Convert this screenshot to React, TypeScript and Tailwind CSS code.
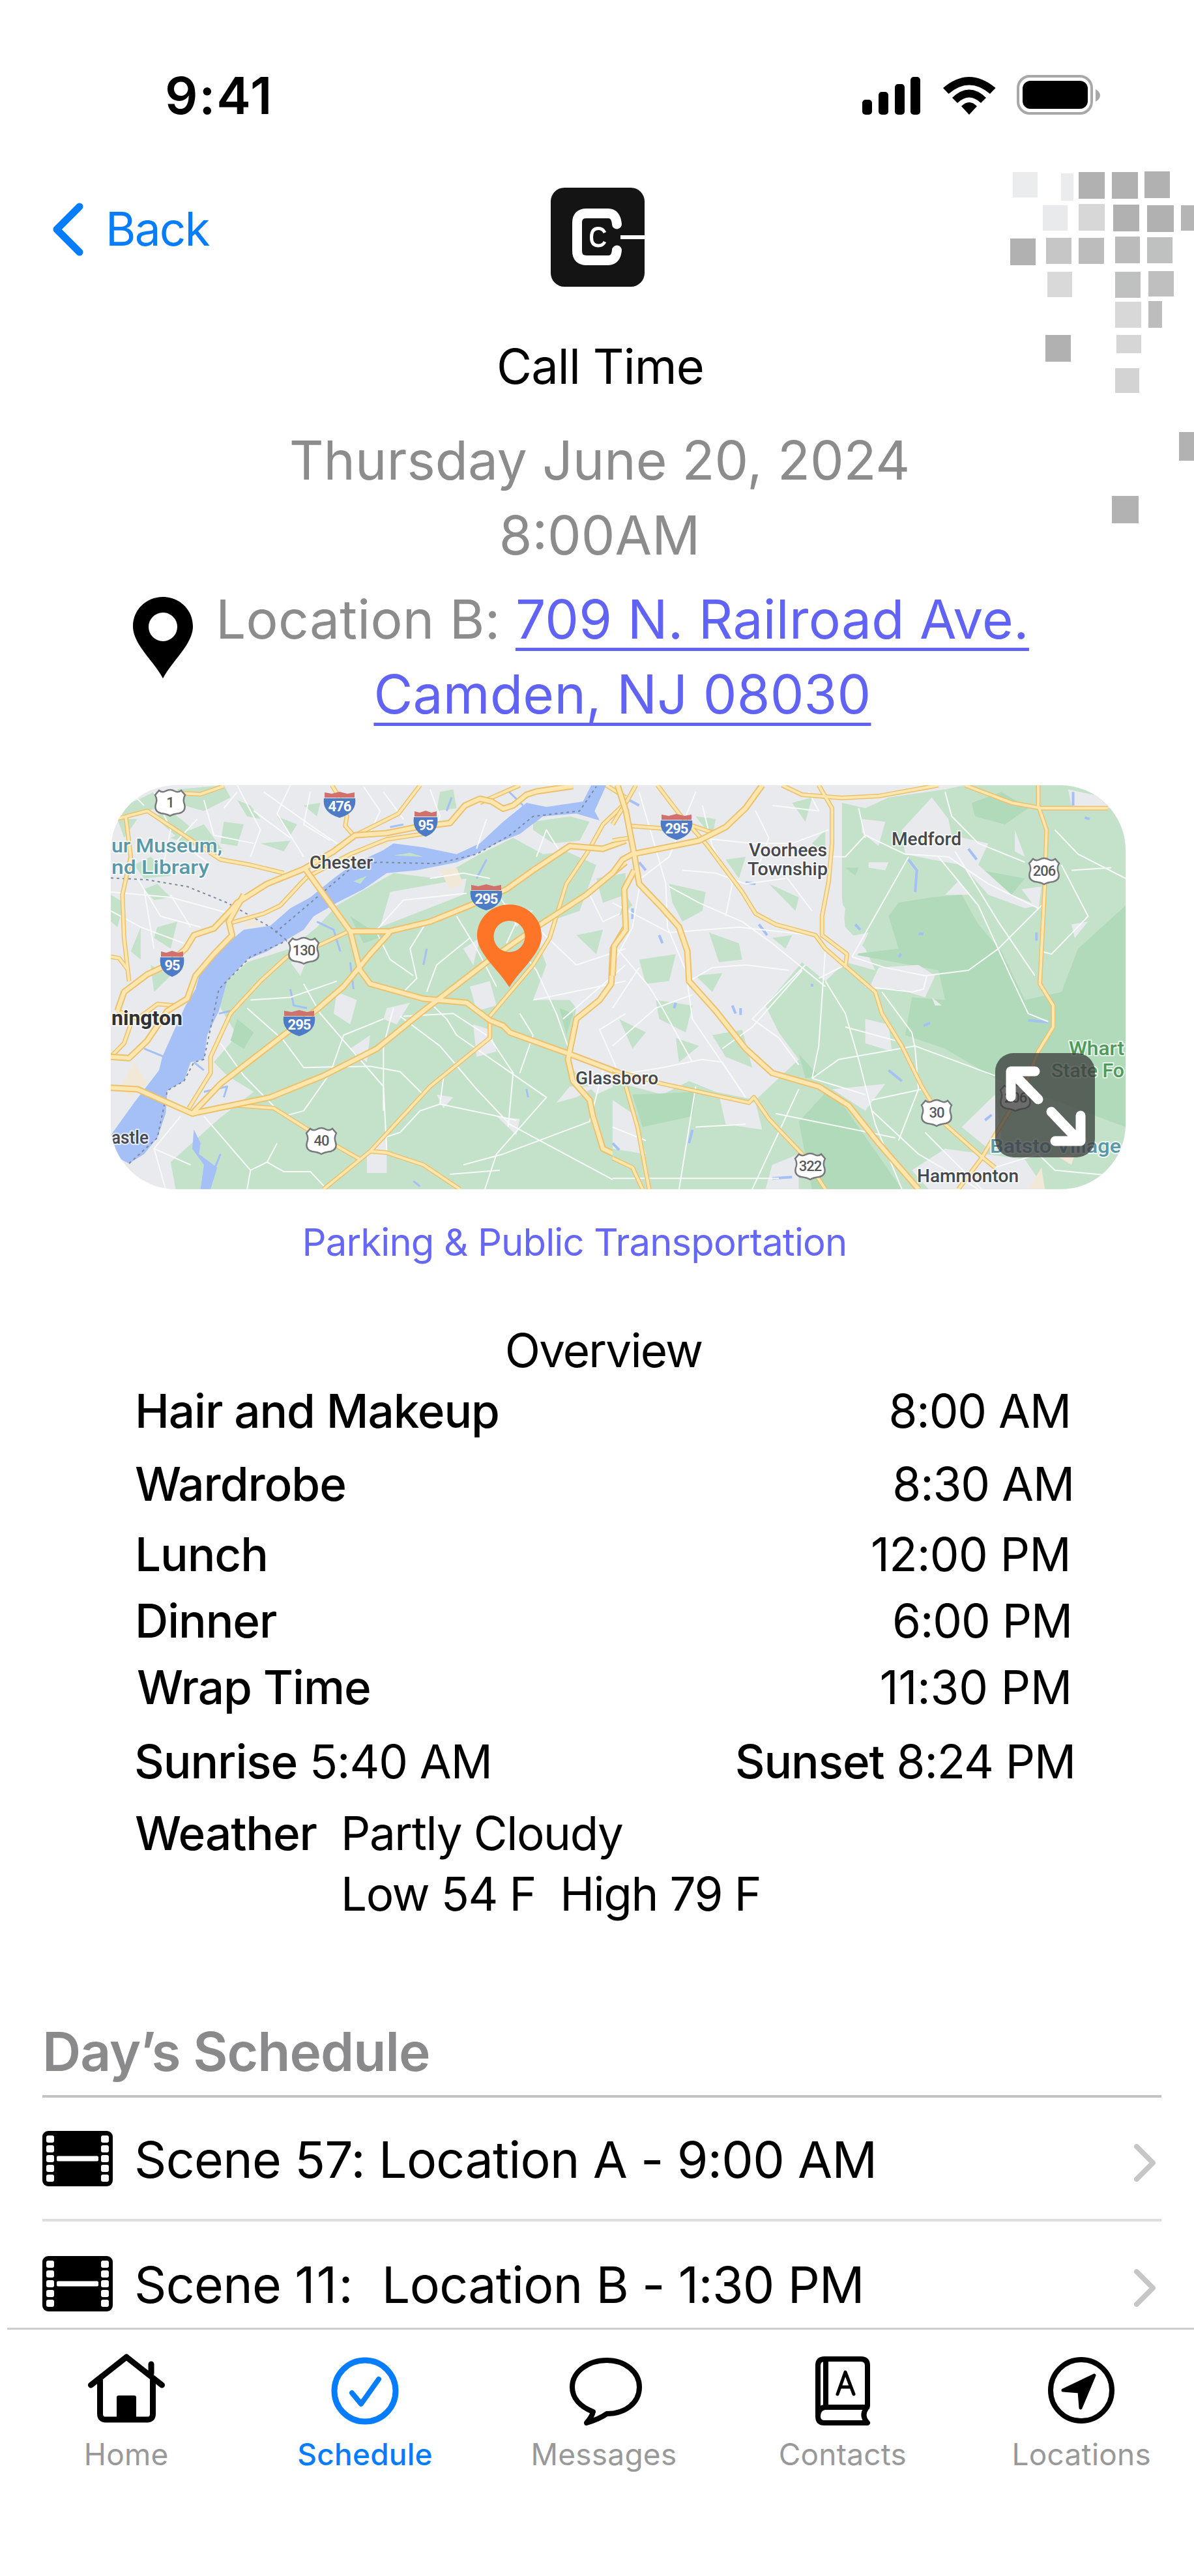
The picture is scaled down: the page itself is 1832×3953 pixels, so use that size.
import type { ReactNode } from 'react';

interface OverviewRow {
  label: string;
  time: string;
  className: string;
  labelClass: string;
  timeClass: string;
}

const overviewRows: OverviewRow[] = [
  { label: 'Hair and Makeup', time: '8:00 AM', className: '-mt-[1px]', labelClass: 'pl-[207px]', timeClass: 'pr-[189px]' },
  { label: 'Wardrobe', time: '8:30 AM', className: 'mt-[18px]', labelClass: 'pl-[207px]', timeClass: 'pr-[184px]' },
  { label: 'Lunch', time: '12:00 PM', className: 'mt-[14px]', labelClass: 'pl-[207px]', timeClass: 'pr-[189px] tracking-[-0.008em]' },
  { label: 'Dinner', time: '6:00 PM', className: 'mt-[8px]', labelClass: 'pl-[207px]', timeClass: 'pr-[187px]' },
  { label: 'Wrap Time', time: '11:30 PM', className: 'mt-[8px]', labelClass: 'pl-[210px]', timeClass: 'pr-[187px] tracking-[-0.002em]' },
];

const scenes = [
  { number: '57', numberClass: '', rest: ' Location A - 9:00 AM' },
  { number: '11', numberClass: 'tracking-[0.03em]', rest: '  Location B - 1:30 PM' },
];

// x, y, width, height, fill
const pixels: [number, number, number, number, string][] = [
  [4, 1, 38, 39, '#ebecee'],
  [78, 3, 19, 42, '#ebecee'],
  [105, 1, 40, 41, '#b1b1b1'],
  [156, 1, 40, 41, '#b1b1b1'],
  [206, 0, 39, 41, '#b1b1b1'],
  [50, 52, 38, 39, '#e9eaec'],
  [105, 50, 40, 41, '#d7d7d7'],
  [158, 51, 40, 41, '#b1b1b1'],
  [210, 52, 41, 41, '#b1b1b1'],
  [262, 52, 20, 39, '#b5b5b5'],
  [0, 103, 39, 41, '#b1b1b1'],
  [55, 102, 39, 40, '#c6c6c6'],
  [105, 102, 39, 40, '#bcbcbc'],
  [161, 100, 38, 41, '#bbbbbb'],
  [210, 101, 39, 40, '#bfc1c0'],
  [57, 154, 38, 39, '#d9d9d9'],
  [161, 154, 39, 40, '#bfc1c0'],
  [212, 153, 39, 39, '#bfbfbf'],
  [161, 200, 40, 40, '#d8d8d8'],
  [212, 199, 21, 41, '#bdbdbd'],
  [54, 251, 39, 41, '#b1b1b1'],
  [163, 251, 38, 28, '#d6d6d6'],
  [161, 302, 37, 38, '#d3d3d3'],
  [259, 400, 23, 44, '#b2b2b2'],
  [156, 498, 41, 42, '#b2b2b2'],
];

const westRoads = [
  'M40 870L60 800 130 735 190 700 245 640 270 590 330 565 380 500 400 470 490 400 600 345 690 280 755 220 850 212 940 190 1040 175 1085 110 1130 85 1165 95 1200 122 1230 110 1270 70 1300 58 1410 38',
  'M20 1155L100 1160 265 1250 350 1140 450 1045 550 950 640 865 720 780 800 660 855 585 860 575',
  'M265 1250L500 1190 660 1110 820 1010 960 870 1150 690 1300 560 1450 440 1568 320',
  'M605 345L740 575 770 720 800 770 960 825 1090 840 1160 905 1200 925 1220 950 1400 1030 1550 1100',
  'M735 576L860 575 980 540 1100 480 1210 420 1290 350 1400 260 1500 270 1568 240',
  'M20 1040L75 1045 130 980 190 870 250 825 275 740 330 660 385 590 375 540 420 440',
  'M1568 560L1530 640 1525 770 1490 830 1420 900 1395 1050 1410 1130 1460 1200 1470 1260 1500 1380 1568 1420',
];

const westSmallRoads = [
  'M20 165L130 130 240 220 350 310 440 330 540 360',
  'M240 65L290 68 360 38',
  'M65 150L80 300 55 440 60 600 75 760',
  'M1160 890L1290 700 1340 600 1390 400 1455 280 1500 180 1568 100',
  'M1160 905V970L980 1150 890 1270 800 1390 660 1530',
  'M265 1250L400 1220 510 1230 620 1315 770 1420',
  'M800 1390L850 1395 960 1440 1070 1530',
  'M255 1230L320 1100 320 1040 380 880 470 760 550 670 650 625 735 576',
  'M685 35L700 65 730 150 725 185 750 220',
  'M950 35L885 140 755 220',
  'M20 670L45 675 70 715M40 870L100 900 160 845 210 850M20 1040L60 990 80 920',
  'M380 545L480 510 530 480 560 440 590 400 610 375 740 290 850 235 960 215',
  'M1510 35L1568 80M1130 100L1250 35',
];

const eastRoads = [
  'M15 35L40 130 65 290 80 400 150 490 200 560 225 650 230 760 310 870 400 1010 480 1100 620 1150 710 1220 800 1360 920 1530',
  'M0 360L30 310 60 290 260 240 340 190 400 120 450 35',
  'M65 350L35 420 40 570 5 630 0 740',
];

const eastSmallRoads = [
  'M135 35L200 140 280 250 390 430 430 510 490 550 610 590 640 640 790 800 810 880 870 1000 930 1150 1000 1290 1110 1410 1150 1450',
  'M510 35L570 70 690 82 800 75 980 35',
  'M620 35L660 120 660 250 650 390 630 520 630 590 705 660 700 710',
  'M1060 35L1200 100 1290 120 1490 120',
  'M1280 35V110L1305 200 1300 400 1285 770 1325 850 1325 930 1280 1020 1240 1150 1150 1330 1110 1415 1040 1530',
  'M0 1090L150 1140 410 1210 425 1190 470 1270 570 1400 640 1530',
  'M0 1415L60 1450 90 1530M40 1150L75 1300 110 1530',
  'M50 185L150 195 240 185 300 210M0 240L50 230M70 35L45 90 0 180',
];

const westStreets = [
  'M20 430L200 450 380 510M100 380L170 520 290 560M150 60L200 200 180 320M400 35L470 200 440 300M560 35L520 140 600 300M780 40L830 130 800 210M300 90L330 220 450 250M480 60L640 200 700 250',
  'M900 460L820 570M900 460L1090 435M1120 270L1150 160M980 380L1080 360 1160 380M1300 300L1330 200 1370 280',
  'M970 540L920 640 940 750 900 800M820 580L860 680 930 740M1060 520L1120 640 1180 780M1250 640L1300 720 1360 880 1400 1020M1290 830L1568 760',
  'M350 990L420 1110 540 1260 600 1240 680 1100 720 960 840 900M600 770L650 880 720 980 840 1150 850 1390M440 830L560 820 700 760',
  'M870 860L840 1000 840 1240M890 890L1010 1000 1120 1160 1220 1290 1310 1350 1568 1520M980 840L1030 900 1060 960 1330 1190 1180 1400 1145 1530M1160 970L1230 1100 1215 1300',
  'M300 1260L440 1460 430 1530M440 1460L490 1430 520 1360M490 1430L540 1465 620 1465 670 1530M230 1260L150 1380 185 1530M150 1380L260 1440',
  'M840 1340L890 1320 950 1240 1010 1215 1240 1275M1010 1215L1020 1120 1060 1060M1080 1440L1200 1400 1460 1280 1500 1090M1040 1475L1190 1460M1150 960L1050 880 900 890M430 860L540 980 600 1080 800 1075 890 1095 960 1180',
  'M1250 880L1290 960 1250 1100M1568 880L1490 940 1540 1080M1380 900L1568 700M1300 560L1420 700 1568 640M1190 450L1240 540 1210 620M1460 440L1500 540 1568 500M1100 600L1000 700 970 800',
  'M80 60L120 110M280 160L220 240 310 320M20 500L110 560 240 620M120 420L150 640M200 440L260 560M450 130L560 230M620 60L600 180 680 240M840 60L900 160M360 120L400 60M980 50L1010 150 1000 180',
];

const eastStreets = [
  'M0 700L60 560 85 380 170 300 250 60M80 60L130 270 160 400 165 560 220 720 240 900 400 1190',
  'M0 620L110 780 150 860 240 1060M0 860L80 710M0 470L170 580 380 560 600 590M170 410L260 470 390 540 480 620 560 700 640 780',
  'M230 760L300 710 400 700 530 720M210 350L310 360 400 400 520 380M270 110L300 260 360 400 340 520M430 130L470 230 440 330M520 370L600 500M480 110L620 130 590 60M260 230L420 250 540 250 650 200',
  'M890 300L720 670M720 670L820 710 940 740 1070 720 1160 640 1290 480M880 290L1010 300 1130 400 1280 490M980 300L1100 480 1200 750 1250 880 1310 910M1000 60L1020 150 1100 250 1240 320M1030 280L1160 540 1270 740',
  'M640 760L700 880 740 1050 790 1290 870 1530M620 750L700 700M580 700L420 900 500 970 560 1070M600 1120L680 1050 910 1000 1150 1110M600 1120L760 1180M640 640L620 1000 600 1120M700 930L850 980',
  'M910 1010L920 1160 860 1350M780 1240L920 1400 1100 1530M490 1250L850 1340M330 1010L420 930 570 720M0 1000L130 860 240 810M0 1110L150 1080 270 1050 330 1060 400 1190M560 1160L420 1530M250 1150L200 1530M0 1490L500 1490M0 1300L100 1350',
  'M1330 200L1400 290 1543 380M1380 350L1500 340M1350 330L1430 520 1320 660 1290 650M810 800L900 950 910 1010M760 780L900 800 935 790 945 740M660 300L700 300 760 220 880 290M740 120L760 230M930 1160L780 1200',
  'M1150 1450L1280 1400 1330 1460 1500 1480M940 1320L1110 1530M400 1290L250 1300',
];

function Roads({ paths, casing, fill }: { paths: string[]; casing: string; fill: string }) {
  return (
    <>
      {paths.map((d) => (
        <path key={d} d={d} className={`stroke-[#ecc06c] ${casing}`} vectorEffect="non-scaling-stroke" />
      ))}
      {paths.map((d) => (
        <path key={d} d={d} className={`stroke-[#fde7ae] ${fill}`} vectorEffect="non-scaling-stroke" />
      ))}
    </>
  );
}

function UsShield({ x, y, label }: { x: number; y: number; label: string }) {
  return (
    <g transform={`translate(${x} ${y})`}>
      <path
        d="M-17 -18Q-12 -14 -7 -17Q0 -21 7 -17Q12 -14 17 -18L23 -11Q19 -4 22 3Q25 14 14 17Q5 18 0 21Q-5 18 -14 17Q-25 14 -22 3Q-19 -4 -23 -11Z"
        fill="#fff"
        stroke="#77797c"
        strokeWidth="2.5"
      />
      <text y="8" textAnchor="middle" fontSize="22" fontWeight="500" fill="#55585c" letterSpacing="-1">{label}</text>
    </g>
  );
}

function InterstateShield({ x, y, label }: { x: number; y: number; label: string }) {
  const w = label.length > 2 ? 24 : 18;
  return (
    <g transform={`translate(${x} ${y})`}>
      <path d={`M${-w} -10H${w}Q${w + 3} 12 0 20Q${-w - 3} 12 ${-w} -10Z`} fill="#4d7bc6" />
      <path d={`M${-w + 1} -11V-19L${-w / 2} -17 0 -20 ${w / 2} -17 ${w - 1} -19V-11Z`} fill="#d0716d" />
      <text y="10" textAnchor="middle" fontSize="22" fontWeight="700" fill="#fff" letterSpacing="-1">{label}</text>
    </g>
  );
}

function MapCard() {
  return (
    <div className="relative ml-[170px] mt-[82px] h-[620px] w-[1557px] overflow-hidden rounded-[100px] tracking-normal">
      <svg viewBox="0 0 1557 620" className="h-full w-full font-['Roboto',sans-serif]">
        <rect width="1557" height="620" fill="#e8eaed" />
        <g transform="scale(0.5102 0.4146) translate(-20 -35)" fill="none" strokeLinejoin="round">
          {/* Land cover */}
          <path
            d="M350 860L345 790 430 690 560 640 640 560 700 480 870 360 1000 380 1130 290 1230 230 1320 290 1390 280 1480 330 1430 500 1290 560 1330 700 1290 830 1400 830 1420 860 1390 1060 1480 1180 1568 1130V1530H215L200 1430 345 1270 450 1170 370 1110 330 1060 400 960Z"
            fill="#c4e2ca"
          />
          <path
            d="M220 50L360 35 380 80 300 130 240 110ZM150 150L200 130 260 190 230 240ZM360 170L420 180 400 260 350 250ZM400 90L440 110 470 160 430 150ZM100 160L60 230 40 160ZM120 420L160 400 200 450 150 460ZM20 440L60 470 40 560 20 540ZM90 330L140 300 200 370 120 380ZM160 560L220 540 200 640 150 600ZM520 150L580 180 560 220ZM1010 60L1050 50 1060 120 1000 130ZM1290 170L1400 150 1460 170 1430 240 1350 250 1290 200ZM470 250L560 240 540 280ZM600 110L650 100 640 150ZM1480 380L1568 360 1568 440 1500 470ZM1420 590L1500 570 1480 660ZM250 60L300 40 280 90ZM110 560L80 650 110 680ZM140 700L200 740 150 800ZM40 120L100 90 150 60 160 120 60 150ZM200 230L300 180 360 280 270 260Z"
            fill="#c4e2ca"
          />
          <path
            d="M700 800L760 830 740 920 690 880ZM850 860L920 840 880 920 840 900ZM1100 780L1160 760 1180 850 1120 870ZM1110 920L1160 940 1180 1020 1120 1040ZM1200 470L1290 500 1240 560ZM740 1010L800 960 790 1060ZM790 1400L850 1340 850 1470 790 1470ZM560 690L610 680 590 740ZM1080 640L1130 600 1110 700ZM860 430L1090 380 1080 440 830 560ZM1480 1150L1400 1150 1360 1210 1420 1190ZM1180 1260L1250 1270 1240 1330ZM1000 1180L1050 1190 1020 1230Z"
            fill="#e8eaed"
          />
          <path d="M400 900L450 950 420 1010 380 980ZM740 520L790 560 850 590 780 620ZM1370 860L1410 880 1390 960Z" fill="#b1dabb" />
          <path d="M1010 350L1060 340 1080 400 1040 420ZM90 1060L130 1140 80 1190 50 1150ZM440 530L480 550 420 560ZM820 250L850 235 850 270Z" fill="#f1e8d7" />

          {/* Delaware River and creeks */}
          <path
            d="M20 1330L90 1210 165 1090 175 1040 215 930 245 850 275 790 290 720 350 640 420 570 500 555 560 490 620 450 690 380 745 330 840 275 870 250 960 265 1060 290 1130 250 1200 170 1270 100 1330 115 1440 95 1465 35H1510L1475 130 1490 165 1420 140 1320 150 1250 215 1180 250 1100 300 1060 320 940 350 850 360 780 420 700 470 630 520 600 570 490 650 430 680 370 760 345 870 310 960 300 1050 260 1060 240 1130 190 1165 185 1250 160 1340 120 1400 75 1435 20 1400Z"
            fill="#a5bff7"
          />
          <path d="M750 390L790 370 770 400ZM870 295L960 300 920 285Z" fill="#c4e2ca" />
          <path
            d="M270 1310L290 1360 285 1400 340 1450 320 1530H290L300 1440 265 1380Z"
            fill="#a5bff7"
          />
          <path
            d="M560 790L570 850 610 860M640 540L690 570 710 650M740 690L750 790M345 880L380 870M1120 380L1150 310M120 1010L180 1040M860 190L900 180M1030 130L1045 80M1210 50L1260 110M270 1060L300 1090M300 1170L370 1150 360 1190M350 1400L330 1460M960 700L970 640M930 1500L950 1520M1270 1160L1275 1190"
            className="stroke-[#a5bff7] stroke-3"
            vectorEffect="non-scaling-stroke"
          />

          {westStreets.map((d) => (
            <path key={d} d={d} className="stroke-[#f8fafa] stroke-2" vectorEffect="non-scaling-stroke" />
          ))}
          <path
            d="M20 378L130 385 250 410 370 470 500 560 550 610M75 1435L160 1340 190 1165 240 1130 270 1060 300 1050 345 790 440 670 550 610M515 580L745 340 820 320 1000 325 1120 290 1220 220 1290 150 1430 130 1480 40"
            className="stroke-[#7d8a9c] stroke-2"
            strokeDasharray="4 5"
            vectorEffect="non-scaling-stroke"
          />
          <Roads paths={westSmallRoads} casing="stroke-7" fill="stroke-4" />
          <Roads paths={westRoads} casing="stroke-10" fill="stroke-6" />

          <g transform="translate(1529 0)">
            <path
              d="M690 100L760 120 830 80 1000 50 1060 35H1543V1530H0V1130L150 1180 230 1130 310 1170 430 1200 560 1050 500 950 460 850 570 690 640 760 700 690 790 720 760 640 700 560 690 450Z"
              fill="#c4e2ca"
            />
            <path
              d="M170 400L280 430 270 500 210 540 180 470ZM290 580L380 620 390 680 320 690ZM80 680L190 660 170 760 100 770ZM130 830L240 850 220 950 140 900ZM300 960L390 940 420 1080 340 1040ZM250 150L310 160 300 230ZM540 100L600 80 580 170ZM340 310L400 300 380 380ZM470 400L560 450 550 500ZM20 900L100 950 60 1010ZM190 970L260 1000 200 1060ZM480 600L540 590 520 640ZM250 740L330 730 300 800ZM40 440L60 480 20 520ZM600 250L640 200 640 290Z"
              fill="#c4e2ca"
            />
            <path
              d="M860 470L960 450 1050 440 1100 550 1170 650 1240 830 1350 800 1400 640 1543 480V1300L1150 1120 1000 1010 880 960 900 820 1000 830 980 720 720 660 860 640 830 520ZM560 1280L650 1160 700 1230 870 1530H600ZM1080 100L1170 60 1250 120 1180 180 1090 150ZM60 1180L250 1170 240 1260 90 1300ZM700 340L740 340 730 370ZM1110 350L1240 380 1200 440ZM560 1030L620 1110 580 1120ZM1340 960L1400 900 1420 980Z"
              fill="#b1dabb"
            />
            <path
              d="M870 200L960 80 1010 160 1020 220 1130 250 1100 330 1200 440 1280 480 1240 490 1130 440 1050 330 960 310 880 290ZM800 710L920 700 970 740 940 820 860 790 770 790ZM750 160L820 170 800 260 750 210ZM770 320L830 320 820 350 770 340ZM1370 50L1480 80 1500 120 1380 110ZM640 400L700 490 690 600 770 580 730 680 640 600ZM760 900L830 920 840 1020 760 990ZM660 1160L820 1140 760 1240ZM1050 1300L1150 1180 1170 1340 1130 1380ZM900 1460L1000 1380 1240 1420 1300 1530H950ZM320 1180L430 1210 450 1310 340 1290ZM1210 200L1240 300 1210 280ZM1230 420L1290 410 1280 500ZM1380 550L1430 540 1390 600ZM960 820L990 850 970 850ZM0 1200L60 1250 100 1400 0 1380ZM480 1440L560 1400 560 1530H460ZM1000 440L1040 390 1070 440Z"
              fill="#e8eaed"
            />
            <path d="M1340 1410L1390 1400 1380 1440ZM1290 1450L1300 1530H1250Z" fill="#f1e8d7" />
            <path
              d="M890 310L915 350 910 430M730 550L745 570M440 550L465 590M360 850L370 880M385 860V885M600 770V780M230 1360L240 1310M0 1360L20 1385M1250 905L1310 912M80 320L100 350M1385 60V110M60 490V530M140 590L150 620M1120 1275L1140 1255M480 1490L540 1485M830 1090L870 1130M1420 155L1435 160M920 585H935M1070 270L1095 310M860 670L868 660M935 925L955 915M190 840L185 860M1275 580V610M400 395L430 400M50 90L80 110"
              className="stroke-[#a5bff7] stroke-4"
              vectorEffect="non-scaling-stroke"
            />
            {eastStreets.map((d) => (
              <path key={d} d={d} className="stroke-[#f8fafa] stroke-2" vectorEffect="non-scaling-stroke" />
            ))}
            <Roads paths={eastSmallRoads} casing="stroke-7" fill="stroke-4" />
            <Roads paths={eastRoads} casing="stroke-10" fill="stroke-6" />
          </g>
        </g>

        <UsShield x={91} y={26} label="1" />
        <UsShield x={296} y={253} label="130" />
        <UsShield x={323} y={545} label="40" />
        <UsShield x={1432} y={131} label="206" />
        <UsShield x={1267} y={502} label="30" />
        <UsShield x={1073} y={584} label="322" />
        <UsShield x={1388} y={479} label="206" />
        <InterstateShield x={351} y={30} label="476" />
        <InterstateShield x={483} y={59} label="95" />
        <InterstateShield x={576} y={172} label="295" />
        <InterstateShield x={94} y={274} label="95" />
        <InterstateShield x={289} y={365} label="295" />
        <InterstateShield x={868} y={64} label="295" />

        <g fontSize="28" fill="#45484c" fontWeight="500" stroke="#fff" strokeOpacity="0.7" strokeWidth="4" strokeLinejoin="round" paintOrder="stroke">
          <text x="305" y="128" textLength="97" lengthAdjust="spacingAndGlyphs">Chester</text>
          <text x="713" y="459" textLength="127" lengthAdjust="spacingAndGlyphs">Glassboro</text>
          <text x="979" y="109" textLength="120" lengthAdjust="spacingAndGlyphs">Voorhees</text>
          <text x="977" y="138" textLength="123" lengthAdjust="spacingAndGlyphs">Township</text>
          <text x="1198" y="92" textLength="107" lengthAdjust="spacingAndGlyphs">Medford</text>
          <text x="1237" y="609" textLength="156" lengthAdjust="spacingAndGlyphs">Hammonton</text>
          <text x="1" y="550" textLength="57" lengthAdjust="spacingAndGlyphs">astle</text>
          <text x="1" y="368" textLength="109" lengthAdjust="spacingAndGlyphs" fontSize="32" fontWeight="700" fill="#2f3135">nington</text>
          <g fontSize="30" fill="#5898a9">
            <text x="1" y="103" textLength="170" lengthAdjust="spacingAndGlyphs">ur Museum,</text>
            <text x="1" y="136" textLength="150" lengthAdjust="spacingAndGlyphs">nd Library</text>
            <text x="1349" y="564" textLength="201" lengthAdjust="spacingAndGlyphs">Batsto Village</text>
          </g>
          <g fontSize="30" fill="#4f9a5b">
            <text x="1470" y="414" textLength="85" lengthAdjust="spacingAndGlyphs">Whart</text>
            <text x="1443" y="448" textLength="112" lengthAdjust="spacingAndGlyphs">State Fo</text>
          </g>
        </g>

        <path
          fillRule="evenodd"
          d="M611.500 310C595 283 562 258 562 231C562 204 584 183 611.500 183C639 183 661 204 661 231C661 258 628 283 611.500 310ZM611.500 208A24 24 0 1 0 611.500 256A24 24 0 1 0 611.500 208Z"
          fill="#ff7527"
        />
      </svg>
      <button className="absolute left-[1357px] top-[411px] h-[160px] w-[153px] rounded-[28px] bg-[#3a3a3a]/75">
        <svg viewBox="0 0 153 160" className="h-full w-full" fill="none" stroke="#fff" strokeWidth="15" strokeLinecap="round" strokeLinejoin="round">
          <path d="M61 28H24V67M26 30L66 71M86 90L128 134M131 96V135H92" />
        </svg>
      </button>
    </div>
  );
}

function StatusBar() {
  return (
    <div className="flex h-[288px] items-center pl-[253px] pt-1">
      <span className="w-[1070px] text-[79px] font-semibold leading-none tracking-[0.022em]">9:41</span>
      <svg width="366" height="62" viewBox="0 0 366 62">
        <rect x="0" y="38" width="15" height="23" rx="5" />
        <rect x="25" y="26" width="15" height="35" rx="5" />
        <rect x="50" y="14" width="15" height="47" rx="5" />
        <rect x="74" y="3" width="15" height="58" rx="5" />
        <path d="M124 20Q164 -14 204.500 20L196 29Q164 2 132.500 29Z" />
        <path d="M138 35Q164 10 190 35L182 43Q164 26 146 43Z" />
        <path d="M152 48Q164 36 176 48L164 61Z" />
        <rect x="239" y="2" width="113" height="57" rx="18" fill="none" stroke="#a8a8a8" strokeWidth="4" />
        <rect x="246" y="9" width="100" height="43" rx="12" />
        <path d="M358 22Q365 26 365 31.500Q365 37 358 41Z" fill="#a8a8a8" />
      </svg>
    </div>
  );
}

function Logo() {
  return (
    <svg width="144" height="152" viewBox="0 0 144 152">
      <rect width="144" height="152" rx="21" fill="#141414" />
      <path
        d="M101.500 56Q100 39.500 88 39.500H55Q40.500 39.500 40.500 54V97Q40.500 111.500 55 111.500H88Q100 111.500 101.500 96"
        fill="none"
        stroke="#fff"
        strokeWidth="15"
        strokeLinecap="round"
      />
      <rect x="107" y="73" width="37" height="6" fill="#fff" />
      <path d="M83 69Q80 62.500 73 62.500Q62.500 62.500 62.500 76Q62.500 89 73 89Q80 89 83 83" fill="none" stroke="#fff" strokeWidth="5" />
    </svg>
  );
}

function FilmIcon() {
  return (
    <svg width="108" height="85" viewBox="0 0 108 85">
      <rect width="108" height="85" rx="9" />
      {[7, 22, 37, 52, 67].map((y) => (
        <g key={y} fill="#fff">
          <rect x="6" y={y} width="12" height="11" rx="3" />
          <rect x="90" y={y} width="12" height="11" rx="3" />
        </g>
      ))}
      <rect x="22" y="38.500" width="64" height="8" rx="2" fill="#fff" />
    </svg>
  );
}

function Tab({ label, active, children }: { label: string; active?: boolean; children: ReactNode }) {
  return (
    <a className="flex w-[366.400px] shrink-0 flex-col items-center pr-[1px]">
      <svg
        width="120"
        height="114"
        viewBox="0 0 120 114"
        fill="none"
        strokeLinecap="round"
        strokeLinejoin="round"
        className={active ? 'stroke-[#067cfe] stroke-9' : 'stroke-black stroke-8'}
      >
        {children}
      </svg>
      <span
        className={
          active
            ? 'mt-[16px] text-[46px] font-medium leading-[56px] tracking-[0.005em] text-[#067cfe]'
            : 'mt-[16px] text-[46px] leading-[56px] tracking-[0.005em] text-[#999999]'
        }
      >
        {label}
      </span>
    </a>
  );
}

export default function App() {
  return (
    <div className="relative h-[3953px] w-[1832px] overflow-hidden bg-white font-['Inter',sans-serif] text-[71px] tracking-[-0.015em] text-black">
      {/* Corner artwork */}
      <svg width="282" height="540" viewBox="0 0 282 540" className="absolute right-0 top-[263px]">
        {pixels.map(([x, y, w, h, fill]) => (
          <rect key={`${x}-${y}`} x={x} y={y} width={w} height={h} fill={fill} />
        ))}
      </svg>

      <StatusBar />

      <header className="flex h-[152px]">
        <button className="flex h-[127px] w-[845px] items-center gap-[33px] pl-[81px] text-[#067cfe]">
          <svg width="48" height="84" viewBox="0 0 48 84" fill="none" stroke="currentColor" strokeWidth="11" strokeLinecap="round" strokeLinejoin="round">
            <path d="M41 7L6 42L41 77" />
          </svg>
          <span className="leading-none tracking-[-0.025em]">Back</span>
        </button>
        <Logo />
      </header>

      <main>
        <h1 className="mt-[62px] pl-[10px] text-center text-[74px] leading-[120px] tracking-[-0.012em]">Call Time</h1>

        <p className="mt-[27px] pl-[8px] text-center text-[82px] leading-[115px] tracking-[0em] text-[#8c8c8c]">
          Thursday June 20, 2024
          <br />
          8:00AM
        </p>

        <div className="mt-[14px] flex pl-[204px] text-[82px] leading-[115px] tracking-[0.003em]">
          <svg width="92" height="125" viewBox="0 0 92 125" className="mt-[23px]">
            <path fillRule="evenodd" d="M46 125C32 98 0 73 0 45C0 20 20 0 46 0C72 0 92 20 92 45C92 73 60 98 46 125ZM46 24A22 22 0 1 0 46 68A22 22 0 1 0 46 24Z" />
          </svg>
          <p className="ml-[35px] whitespace-nowrap text-center text-[#8c8c8c]">
            Location B:{' '}
            <a className="text-[#6163f4] underline decoration-[5px] underline-offset-[14px] [text-decoration-skip-ink:none]">
              709 N. Railroad Ave.
              <br />
              Camden, NJ 08030
            </a>
          </p>
        </div>

        <MapCard />

        <a className="mt-[41px] block pr-[69px] text-center text-[58px] leading-[80px] tracking-[-0.015em] text-[#6668f5]">
          Parking &amp; Public Transportation
        </a>

        <section className="mt-[79px]">
          <h2 className="pl-[20px] text-center leading-[94px] tracking-[-0.026em]">Overview</h2>
          {overviewRows.map((row) => (
            <div key={row.label} className={`flex justify-between leading-[94px] ${row.className}`}>
              <span className={`font-medium ${row.labelClass}`}>{row.label}</span>
              <span className={row.timeClass}>{row.time}</span>
            </div>
          ))}
          <div className="mt-[20px] flex justify-between pl-[206px] pr-[182px] leading-[94px]">
            <span>
              <span className="font-medium">Sunrise</span> 5:40 AM
            </span>
            <span>
              <span className="font-medium">Sunset</span> 8:24 PM
            </span>
          </div>
          <div className="mt-[17px] flex pl-[207px] leading-[93px]">
            <span className="w-[316px] font-medium">Weather</span>
            <p className="whitespace-pre tracking-[-0.02em]">
              Partly Cloudy
              <br />
              {'Low 54 F  High 79 F'}
            </p>
          </div>
        </section>

        <section className="ml-[65px] mt-[137px] w-[1717px]">
          <h2 className="h-[129px] border-b-4 border-[#c3c3c3] text-[82px] font-semibold leading-[117px] tracking-[-0.012em] text-[#8a8a8c]">
            Day’s Schedule
          </h2>
          {scenes.map((scene) => (
            <div
              key={scene.number}
              className="flex h-[190px] items-center border-b-4 border-[#dedede] last:border-b-0"
            >
              <FilmIcon />
              <span className="ml-[33px] mt-[5px] whitespace-pre text-[77px] leading-none tracking-[-0.009em]">
                Scene <span className={scene.numberClass}>{scene.number}:</span>
                {scene.rest}
              </span>
              <svg width="34" height="58" viewBox="0 0 34 58" fill="none" stroke="#c6c6c6" strokeWidth="8" strokeLinecap="round" strokeLinejoin="round" className="ml-auto mr-[8px] mt-[14px]">
                <path d="M4 4L29 29L4 54" />
              </svg>
            </div>
          ))}
        </section>
      </main>

      {/* Tab bar */}
      <nav className="absolute left-[11px] top-[3572px] flex h-[381px] w-[1832px] border-t-[3px] border-[#cdcdcd] bg-white pt-[33px] tracking-normal">
        <Tab label="Home">
          <path d="M5.500 52L60 9L114.500 52M19.500 44V96Q19.500 105 28 105H92Q100.500 105 100.500 96V44M98 20V34" className="stroke-9" />
          <rect x="45" y="68" width="30" height="37" rx="3" fill="#000" stroke="none" />
        </Tab>
        <Tab label="Schedule" active>
          <circle cx="60" cy="61" r="47" />
          <path d="M40 64L54 81L81 43" className="stroke-8" />
        </Tab>
        <Tab label="Messages">
          <path d="M65 14C93 14 115 32 115 55C115 79 94 96 65 96Q54 104 34 110Q42 101 44 93C24 85 12 72 12 55C12 32 36 14 65 14Z" />
        </Tab>
        <Tab label="Contacts">
          <path d="M22 100V22Q22 12 32 12H88Q98 12 98 22V84Q98 86 96 88Q88 99 98 110H32Q22 110 22 100Q22 88 32 86H94M34 13V84" />
          <path d="M52 66L64 32L77 66M57 55H72" className="stroke-5" />
        </Tab>
        <Tab label="Locations">
          <circle cx="60" cy="60" r="47" />
          <path d="M32 60L80 37L59 87L57 62Z" fill="#000" className="stroke-5" />
        </Tab>
      </nav>
    </div>
  );
}
